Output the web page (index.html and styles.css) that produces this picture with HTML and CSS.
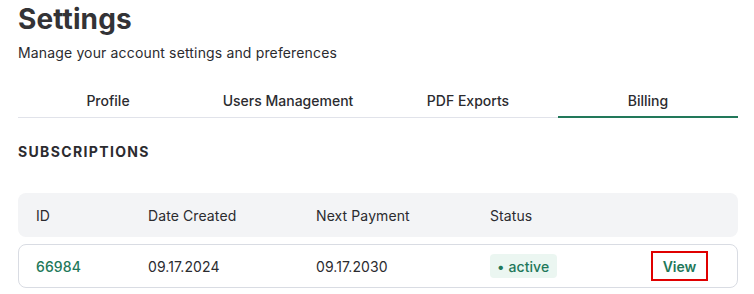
FILE: index.html
```html
<!DOCTYPE html>
<html lang="en">
<head>
    <meta charset="UTF-8">
    <meta name="viewport" content="width=device-width, initial-scale=1.0">
    <title>Settings</title>
    <link rel="stylesheet" href="styles.css">
</head>
<body>
    <div id="settings">
        <h1>Settings</h1>
        <p class="subtitle">Manage your account settings and preferences</p>

        <nav class="tabs">
            <a class="tab">Profile</a>
            <a class="tab">Users Management</a>
            <a class="tab">PDF Exports</a>
            <a class="tab active">Billing</a>
        </nav>

        <h2>Subscriptions</h2>

        <div class="table">
            <div class="row head">
                <span>ID</span>
                <span>Date Created</span>
                <span>Next Payment</span>
                <span>Status</span>
                <span></span>
            </div>
            <div class="row">
                <span class="sub-id">66984</span>
                <span>09.17.2024</span>
                <span>09.17.2030</span>
                <span><span class="badge">&bull; active</span></span>
                <span><button class="view-btn">View</button></span>
            </div>
        </div>
    </div>
</body>
</html>
```

FILE: styles.css
```css
:root {
    --text-color: #2b2b2f;
    --green: #22785a;
    --line: #e1e3ea;
    --head-bg: #f3f4f6;
    --badge-bg: #ebf6f1;
}
body {
    font-family: Inter, 'Noto Sans', sans-serif;
    color: var(--text-color);
    margin: 0;
    padding: 0 16px 0 18px;
    background: #fff;
}
h1 {
    font-size: 28px;
    font-weight: 700;
    line-height: 34px;
    letter-spacing: 0.1px;
    margin: 0;
    padding-top: 2px;
    color: #333336;
}
.subtitle {
    font-size: 14px;
    line-height: 17px;
    letter-spacing: 0.15px;
    margin: 8px 0 0;
}
.tabs {
    display: flex;
    margin-top: 21px;
    border-bottom: 1px solid var(--line);
}
.tab {
    flex: 1;
    text-align: center;
    font-size: 14px;
    font-weight: 500;
    line-height: 17px;
    padding: 10px 0 7px;
    margin-bottom: -1px;
    border-bottom: 2px solid transparent;
}
.tab.active {
    border-bottom-color: var(--green);
}
h2 {
    font-size: 14px;
    font-weight: 700;
    text-transform: uppercase;
    letter-spacing: 1.35px;
    line-height: 17px;
    margin: 25px 0 0;
}
.table {
    margin-top: 33px;
    display: flex;
    flex-direction: column;
    gap: 7px;
}
.row {
    display: grid;
    grid-template-columns: 112px 168px 174px 1fr 57px;
    align-items: center;
    height: 44px;
    padding: 0 30px 0 18px;
    font-size: 14px;
    letter-spacing: 0.1px;
    border-radius: 8px;
    box-sizing: border-box;
}
.row.head {
    background: var(--head-bg);
}
.row:not(.head) {
    border: 1px solid #d9dce3;
    padding: 0 29px 0 17px;
}
.sub-id {
    color: var(--green);
    font-weight: 500;
}
.badge {
    display: inline-block;
    background: var(--badge-bg);
    color: var(--green);
    font-weight: 500;
    border-radius: 4px;
    padding: 4px 8px 3px 7px;
    line-height: 17px;
}
.view-btn {
    font-family: inherit;
    font-size: 14px;
    font-weight: 600;
    color: var(--green);
    background: #fff;
    border: 2px solid #e00000;
    width: 57px;
    height: 30px;
    padding: 0;
    cursor: pointer;
}
```
